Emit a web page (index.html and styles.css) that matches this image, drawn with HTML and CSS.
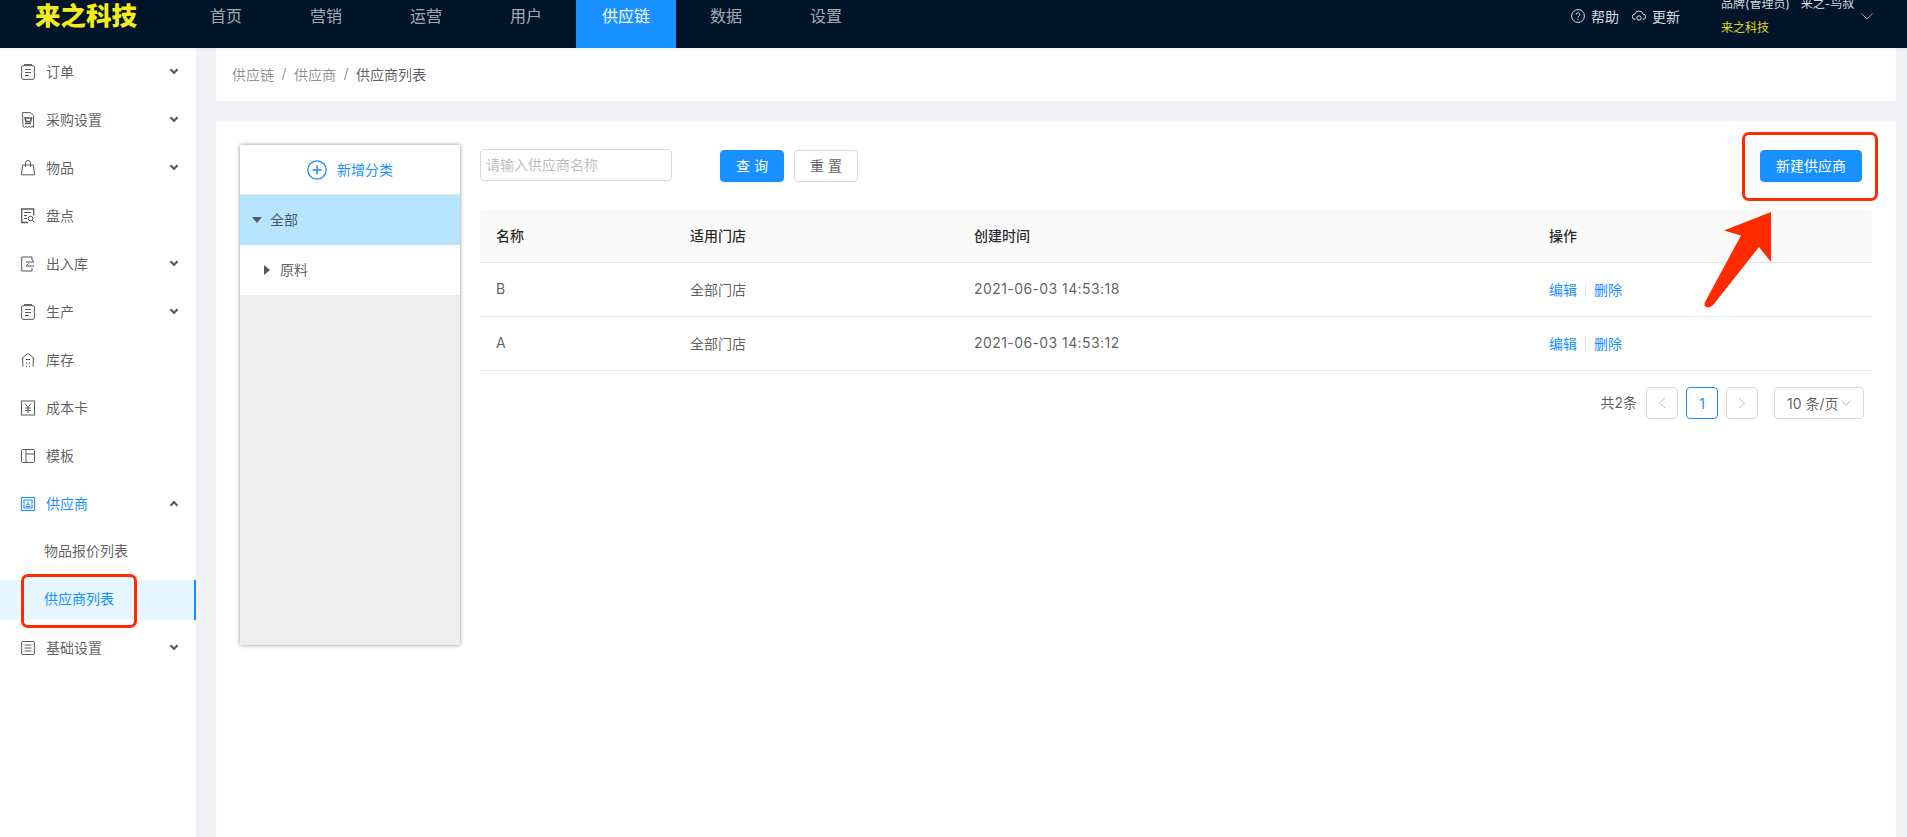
FILE: index.html
```html
<!DOCTYPE html>
<html>
<head>
  <meta charset="utf-8">
  <title>供应商列表</title>
  <link rel="stylesheet" href="styles.css">
</head>
<body>

  <!-- Top bar -->
  <header class="topbar">
    <div class="logo">来之科技</div>
    <nav class="topnav">
      <a>首页</a>
      <a>营销</a>
      <a>运营</a>
      <a>用户</a>
      <a class="active">供应链</a>
      <a>数据</a>
      <a>设置</a>
    </nav>
    <div class="topright">
      <span class="tool">
        <svg width="14" height="14" viewBox="0 0 14 14" fill="none" stroke="currentColor" stroke-width="1"><circle cx="7" cy="7" r="6.4"/><path d="M5.2 5.6a1.8 1.8 0 1 1 2.8 1.5c-.7.4-1 .8-1 1.5"/><path d="M7 9.9v1"/></svg>
        帮助
      </span>
      <span class="tool">
        <svg width="14" height="14" viewBox="0 0 14 14" fill="none" stroke="currentColor" stroke-width="1"><path d="M3.6 10.3H3A2.6 2.6 0 0 1 2.9 5.1 4.2 4.2 0 0 1 11 5.1a2.6 2.6 0 0 1 .1 5.2h-.7"/><circle cx="7" cy="9" r="2.2"/></svg>
        更新
      </span>
      <div class="user">
        <div class="user-line"><span>品牌(管理员)</span><span>来之-鸟叔</span></div>
        <div class="user-brand">来之科技</div>
      </div>
      <svg class="user-arrow" width="12" height="7" viewBox="0 0 12 7" fill="none" stroke="currentColor" stroke-width="1"><path d="M.5.5 6 6 11.5.5"/></svg>
    </div>
  </header>

  <div class="layout">
    <!-- Left menu -->
    <aside class="sidebar">
      <div class="menu-item">
        <svg class="menu-icon" viewBox="0 0 14 16"><rect x=".6" y="1.6" width="12.8" height="13.8" rx="1.5"/><path d="M3 .6h8M4 5.5h6M4 8.5h6M4 11.500h4"/></svg>
        <span>订单</span><i class="chev"></i>
      </div>
      <div class="menu-item">
        <svg class="menu-icon" viewBox="0 0 14 16"><path d="M1.5.6h8l3 3v11.800l-1.500-1-1.500 1-1.500-1-1.500 1-1.500-1-1.500 1-1.500-1z"/><path d="M4 6h6.500l-.8 3.500H5zM4 11.500h6" stroke-width="1.5"/></svg>
        <span>采购设置</span><i class="chev"></i>
      </div>
      <div class="menu-item">
        <svg class="menu-icon" viewBox="0 0 14 16"><path d="M1.5 5h11l1 9.800H.5zM4.500 7V3a2.500 2.500 0 0 1 5 0v4"/></svg>
        <span>物品</span><i class="chev"></i>
      </div>
      <div class="menu-item">
        <svg class="menu-icon" viewBox="0 0 14 16"><path d="M7 14.500H.7V1h12v6.500" stroke-width="1.3"/><path d="M3 4.500h7M3 7.500h3M3 10.500h3"/><circle cx="9.500" cy="10.500" r="2.300"/><path d="M11.300 12.300l2 2"/></svg>
        <span>盘点</span>
      </div>
      <div class="menu-item">
        <svg class="menu-icon" viewBox="0 0 14 16"><path d="M11 4V1H.7v14H11v-3"/><path d="M5 6h8M10.500 3.500 13 6M13 10H5M7.500 7.500 5 10"/></svg>
        <span>出入库</span><i class="chev"></i>
      </div>
      <div class="menu-item">
        <svg class="menu-icon" viewBox="0 0 14 16"><rect x=".6" y="1.6" width="12.8" height="13.8" rx="1.5"/><path d="M3 .6h8M4 5.500h6M4 8.500h6M4 11.500h4"/></svg>
        <span>生产</span><i class="chev"></i>
      </div>
      <div class="menu-item">
        <svg class="menu-icon" viewBox="0 0 14 16"><path d="M.6 6.500 7 1.500l6.400 5M1.800 6v8.500M12.200 6v8.500"/><path d="M5 7.500h4M5 11h1M8 11h1M5 14.500h1M8 14.500h1"/></svg>
        <span>库存</span>
      </div>
      <div class="menu-item">
        <svg class="menu-icon" viewBox="0 0 14 16"><rect x=".5" y="1" width="13" height="14"/><path d="M4 3.500 7 7.500l3-4M7 7.500V13M4.200 8h5.600M4.200 10.500h5.600"/></svg>
        <span>成本卡</span>
      </div>
      <div class="menu-item">
        <svg class="menu-icon" viewBox="0 0 14 16"><rect x=".5" y="1.500" width="13" height="13" rx="1"/><path d="M5 1.500v13M5 6h8.500"/></svg>
        <span>模板</span>
      </div>
      <div class="menu-item open">
        <svg class="menu-icon" viewBox="0 0 14 16"><rect x=".5" y="1.500" width="13" height="13"/><rect x="3" y="4" width="8" height="8"/><path d="M5.500 9.500a1.500 1.500 0 1 1 3 0M7 5.500v2M4.500 10.500h5"/></svg>
        <span>供应商</span><i class="chev up"></i>
      </div>
      <div class="submenu">
        <a>物品报价列表</a>
        <a class="active">供应商列表</a>
      </div>
      <div class="menu-item">
        <svg class="menu-icon" viewBox="0 0 14 16"><rect x=".6" y="1.500" width="12.800" height="13" rx="1.500"/><path d="M3.500 5h7M3.500 8h7M3.500 11h7"/></svg>
        <span>基础设置</span><i class="chev"></i>
      </div>
    </aside>

    <main class="content">
      <div class="crumbs">
        <span>供应链</span><em>/</em><span>供应商</span><em>/</em><b>供应商列表</b>
      </div>

      <section class="card">
        <!-- Category tree -->
        <div class="tree">
          <div class="tree-add">
            <svg width="20" height="20" viewBox="0 0 20 20" fill="none" stroke="#1890ff" stroke-width="1.3"><circle cx="10" cy="10" r="9.2"/><path d="M10 5.500v9M5.500 10h9" stroke-width="1.5"/></svg>
            <span>新增分类</span>
          </div>
          <div class="tree-row selected"><i class="tri-down"></i>全部</div>
          <div class="tree-row child"><i class="tri-right"></i>原料</div>
        </div>

        <div class="list">
          <div class="toolbar">
            <input class="search" type="text" placeholder="请输入供应商名称">
            <button class="btn primary">查 询</button>
            <button class="btn">重 置</button>
            <button class="btn primary create">新建供应商</button>
          </div>

          <table class="grid">
            <colgroup><col class="c1"><col class="c2"><col class="c3"><col></colgroup>
            <thead>
              <tr><th>名称</th><th>适用门店</th><th>创建时间</th><th>操作</th></tr>
            </thead>
            <tbody>
              <tr>
                <td>B</td><td>全部门店</td><td class="date">2021-06-03 14:53:18</td>
                <td><a>编辑</a><i class="sep"></i><a>删除</a></td>
              </tr>
              <tr>
                <td>A</td><td>全部门店</td><td class="date">2021-06-03 14:53:12</td>
                <td><a>编辑</a><i class="sep"></i><a>删除</a></td>
              </tr>
            </tbody>
          </table>

          <div class="pager">
            <span class="total">共2条</span>
            <span class="page muted"><svg width="8" height="12" viewBox="0 0 8 12" fill="none" stroke="currentColor"><path d="M7 1 1.500 6 7 11"/></svg></span>
            <span class="page current">1</span>
            <span class="page muted"><svg width="8" height="12" viewBox="0 0 8 12" fill="none" stroke="currentColor"><path d="M1 1l5.500 5L1 11"/></svg></span>
            <span class="size">10 条/页<svg width="10" height="6" viewBox="0 0 10 6" fill="none" stroke="#bfbfbf"><path d="M.5.5 5 5.500 9.500.5"/></svg></span>
          </div>
        </div>
      </section>
    </main>
  </div>

  <!-- Red marks drawn over the screenshot -->
  <div class="mark mark-menu"></div>
  <div class="mark mark-create"></div>
  <svg class="mark-arrow" width="70" height="100" viewBox="0 0 70 100"><path d="M68 0 21 18.500 38 23.500 2 90c-2 4 1.500 7 6 4.500 1-.5 1.500-1 2.500-2L56 35l12 15z" fill="#ff2a00"/></svg>

</body>
</html>
```

FILE: styles.css
```css
* {
  box-sizing: border-box;
}
html, body {
  height: 100%;
}
body {
  margin: 0;
  position: relative;
  overflow: hidden;
  background: #f0f2f5;
  color: rgba(0, 0, 0, 0.65);
  font-family: Inter, "Noto Sans CJK SC", sans-serif;
  font-size: 14px;
}
a {
  cursor: pointer;
}

/* top bar */
.topbar {
  position: relative;
  z-index: 2;
  display: flex;
  height: 48px;
  overflow: hidden;
  background: #001529;
  color: rgba(255, 255, 255, 0.65);
  box-shadow: 0 1px 4px rgba(0, 21, 41, 0.08);
}
.logo {
  width: 176px;
  padding-left: 35px;
  height: 32px;
  line-height: 32px;
  color: #f6ec1c;
  font-size: 25.5px;
  font-weight: 900;
  white-space: nowrap;
}
.topnav {
  display: flex;
}
.topnav a {
  width: 100px;
  height: 48px;
  line-height: 32px;
  text-align: center;
  font-size: 16px;
}
.topnav a.active {
  background: #1890ff;
  color: #fff;
}
.topright {
  display: flex;
  align-items: center;
  height: 32px;
  margin-left: auto;
  padding-right: 34px;
  color: rgba(255, 255, 255, 0.85);
}
.tool {
  display: flex;
  align-items: center;
  gap: 6px;
  margin-right: 13px;
}
.tool + .user {
  margin-left: 28px;
}
.user {
  display: flex;
  flex-direction: column;
  flex: none;
  width: 140px;
  height: 48px;
  font-size: 12px;
  line-height: 24px;
}
.user-line {
  display: flex;
  gap: 11px;
  white-space: nowrap;
}
.user-brand {
  color: #e6d71e;
}
.user-arrow {
  color: rgba(255, 255, 255, 0.6);
}

/* layout */
.layout {
  display: flex;
  height: calc(100% - 48px);
}
.sidebar {
  flex: none;
  width: 196px;
  background: #fff;
}
.menu-item {
  display: flex;
  align-items: center;
  height: 48px;
  padding: 0 18px 0 21px;
}
.menu-item span {
  flex: 1;
  margin-left: 11px;
  padding-bottom: 2px;
}
.menu-item.open {
  color: #1890ff;
}
.menu-icon {
  flex: none;
  width: 14px;
  height: 16px;
  fill: none;
  stroke: #595959;
  stroke-width: 1;
}
.menu-item.open .menu-icon {
  stroke: #1890ff;
}
.chev {
  width: 6px;
  height: 6px;
  margin: -5px 1px 0 0;
  border-right: 2px solid #595959;
  border-bottom: 2px solid #595959;
  transform: rotate(45deg);
}
.chev.up {
  margin-top: 1px;
  transform: rotate(225deg);
}
.submenu {
  display: flex;
  flex-direction: column;
  gap: 8px;
  padding: 4px 0;
}
.submenu a {
  height: 40px;
  line-height: 38px;
  padding-left: 44px;
}
.submenu a.active {
  background: #e6f7ff;
  border-right: 2px solid #1890ff;
  color: #1890ff;
}

/* content */
.content {
  flex: 1;
  display: flex;
  flex-direction: column;
  gap: 20px;
  min-width: 0;
  padding: 0 11px 0 20px;
}
.crumbs {
  display: flex;
  align-items: center;
  flex: none;
  height: 53px;
  padding: 0 0 2px 16px;
  background: #fff;
  color: rgba(0, 0, 0, 0.45);
}
.crumbs em {
  margin: 0 7.5px;
  font-style: normal;
}
.crumbs b {
  font-weight: 400;
  color: rgba(0, 0, 0, 0.65);
}
.card {
  flex: 1;
  display: flex;
  gap: 20px;
  padding: 24px 24px 0;
  background: #fff;
}

/* tree */
.tree {
  flex: none;
  width: 220px;
  height: 500px;
  background: #eee;
  box-shadow: 0 0 4px rgba(0, 0, 0, 0.45);
}
.tree-add {
  display: flex;
  align-items: center;
  justify-content: center;
  gap: 10px;
  height: 50px;
  background: #fff;
  border-bottom: 1px solid #e8e8e8;
  color: #1890ff;
}
.tree-add span {
  padding-bottom: 2px;
}
.tree-row {
  display: flex;
  align-items: center;
  height: 50px;
  padding-bottom: 2px;
  background: #fff;
}
.tree-row.selected {
  padding-left: 12px;
  background: #b7e4ff;
}
.tree-row.child {
  padding-left: 24px;
}
.tri-down {
  margin: 2px 8px 0 0;
  border-top: 6px solid #595959;
  border-left: 5px solid transparent;
  border-right: 5px solid transparent;
}
.tri-right {
  margin: 2px 10px 0 0;
  border-left: 6px solid #595959;
  border-top: 5px solid transparent;
  border-bottom: 5px solid transparent;
}

/* list */
.list {
  flex: 1;
  min-width: 0;
  padding-top: 4px;
}
.toolbar {
  display: flex;
  align-items: flex-start;
  height: 32px;
  padding-right: 10px;
  margin-bottom: 28px;
}
.search {
  width: 192px;
  height: 32px;
  padding: 0 5px 2px;
  margin-right: 48px;
  border: 1px solid #d9d9d9;
  border-radius: 4px;
  font: inherit;
  outline: none;
}
.search::placeholder {
  color: #bfbfbf;
}
.btn {
  width: 64px;
  height: 32px;
  margin: 1px 10px 0 0;
  padding: 0 0 3px;
  border: 1px solid #d9d9d9;
  border-radius: 4px;
  background: #fff;
  color: rgba(0, 0, 0, 0.65);
  font: inherit;
}
.btn.primary {
  background: #1890ff;
  border-color: #1890ff;
  color: #fff;
  box-shadow: 0 2px 0 rgba(0, 0, 0, 0.04);
}
.btn.create {
  width: 102px;
  margin: 1px 0 0 auto;
}

/* table */
.grid {
  width: 100%;
  border-collapse: separate;
  border-spacing: 0;
  table-layout: fixed;
}
.grid .c1 {
  width: 194px;
}
.grid .c2 {
  width: 284px;
}
.grid .c3 {
  width: 575px;
}
.grid th, .grid td {
  height: 54px;
  padding: 0 16px 2px;
  text-align: left;
  font-weight: 500;
  border-bottom: 1px solid #e8e8e8;
}
.grid th {
  background: #fafafa;
  color: rgba(0, 0, 0, 0.85);
}
.grid th:first-child {
  border-top-left-radius: 4px;
}
.grid th:last-child {
  border-top-right-radius: 4px;
}
.grid td {
  font-weight: 400;
}
.grid .date {
  letter-spacing: 0.42px;
}
.grid a {
  color: #1890ff;
}
.sep {
  display: inline-block;
  width: 1px;
  height: 14px;
  margin: 0 8px;
  background: #e8e8e8;
  vertical-align: -2px;
}

/* pagination */
.pager {
  display: flex;
  align-items: center;
  justify-content: flex-end;
  gap: 8px;
  margin-top: 16px;
  padding-right: 8px;
}
.total {
  margin-right: 1px;
  padding-bottom: 2px;
}
.page {
  display: flex;
  align-items: center;
  justify-content: center;
  width: 32px;
  height: 32px;
  border: 1px solid #d9d9d9;
  border-radius: 4px;
}
.page.muted {
  color: #bfbfbf;
}
.page.current {
  border-color: #1890ff;
  color: #1890ff;
}
.size {
  display: flex;
  align-items: center;
  justify-content: space-between;
  width: 90px;
  height: 32px;
  margin-left: 8px;
  padding: 0 12px;
  border: 1px solid #d9d9d9;
  border-radius: 4px;
  white-space: nowrap;
}

/* red marks */
.mark {
  position: absolute;
  z-index: 3;
  border: 3px solid #ff2a00;
  border-radius: 7px;
}
.mark-menu {
  left: 21px;
  top: 574px;
  width: 116px;
  height: 54px;
}
.mark-create {
  left: 1742px;
  top: 132px;
  width: 136px;
  height: 69px;
}
.mark-arrow {
  position: absolute;
  z-index: 3;
  left: 1703px;
  top: 212px;
}
```
